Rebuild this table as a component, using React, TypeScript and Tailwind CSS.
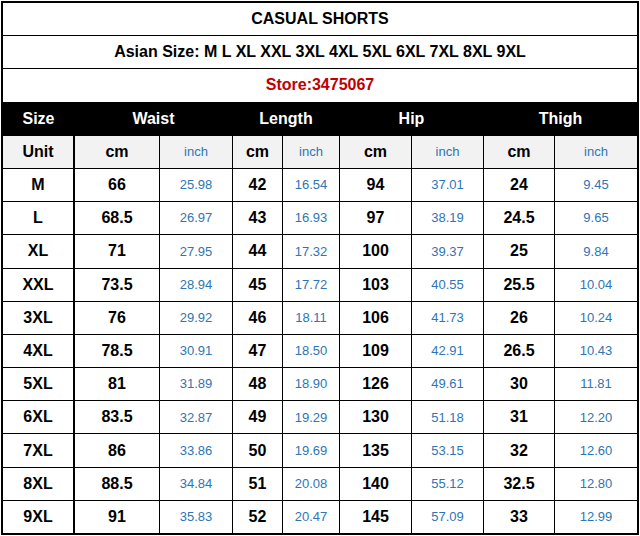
import React from 'react';

type Row = [string, string, string, string, string, string, string, string, string];

const ROWS: Row[] = [
  ['M', '66', '25.98', '42', '16.54', '94', '37.01', '24', '9.45'],
  ['L', '68.5', '26.97', '43', '16.93', '97', '38.19', '24.5', '9.65'],
  ['XL', '71', '27.95', '44', '17.32', '100', '39.37', '25', '9.84'],
  ['XXL', '73.5', '28.94', '45', '17.72', '103', '40.55', '25.5', '10.04'],
  ['3XL', '76', '29.92', '46', '18.11', '106', '41.73', '26', '10.24'],
  ['4XL', '78.5', '30.91', '47', '18.50', '109', '42.91', '26.5', '10.43'],
  ['5XL', '81', '31.89', '48', '18.90', '126', '49.61', '30', '11.81'],
  ['6XL', '83.5', '32.87', '49', '19.29', '130', '51.18', '31', '12.20'],
  ['7XL', '86', '33.86', '50', '19.69', '135', '53.15', '32', '12.60'],
  ['8XL', '88.5', '34.84', '51', '20.08', '140', '55.12', '32.5', '12.80'],
  ['9XL', '91', '35.83', '52', '20.47', '145', '57.09', '33', '12.99'],
];

const cell = 'flex items-center justify-center bg-white';
const bold = 'text-[16px] font-bold text-black';
const blue = 'text-[13px] text-[#2e75b6]';

export default function App() {
  return (
    <div className="w-[640px] h-[536px] bg-white p-px" style={{ fontFamily: '"Liberation Sans", Arial, sans-serif' }}>
      <div className="w-[638px] h-[534px] border-2 border-black">
        <div className="grid h-[530px] gap-px bg-black grid-cols-[71px_84px_72px_49px_56px_71px_71px_70px_1fr] grid-rows-[repeat(16,1fr)]">
          <div className={`${cell} col-span-9 text-[16px] font-bold text-black`}>CASUAL SHORTS</div>
          <div className={`${cell} col-span-9 text-[16px] font-bold text-black`}>
            Asian Size: M L XL XXL 3XL 4XL 5XL 6XL 7XL 8XL 9XL
          </div>
          <div className={`${cell} col-span-9 text-[16px] font-bold text-[#c00000]`}>Store:3475067</div>

          {/* black header */}
          <div className="flex items-center justify-center bg-black text-[16px] font-bold text-white">Size</div>
          <div className="col-span-2 flex items-center justify-center bg-black text-[16px] font-bold text-white">Waist</div>
          <div className="col-span-2 flex items-center justify-center bg-black text-[16px] font-bold text-white">Length</div>
          <div className="col-span-2 flex items-center justify-center bg-black text-[16px] font-bold text-white">Hip</div>
          <div className="col-span-2 flex items-center justify-center bg-black text-[16px] font-bold text-white">Thigh</div>

          {/* units */}
          <div className={`flex items-center justify-center bg-[#f2f2f2] border-r border-black ${bold}`}>Unit</div>
          {['cm', 'inch', 'cm', 'inch', 'cm', 'inch', 'cm', 'inch'].map((u, i) => (
            <div key={i} className={`flex items-center justify-center bg-[#f2f2f2] ${i % 2 === 0 ? bold : blue}`}>
              {u}
            </div>
          ))}

          {ROWS.map((row) =>
            row.map((v, i) => (
              <div
                key={row[0] + i}
                className={`${cell} ${i === 0 ? 'border-r border-black' : ''} ${i === 0 || i % 2 === 1 ? bold : blue}`}
              >
                {v}
              </div>
            ))
          )}
        </div>
      </div>
    </div>
  );
}
